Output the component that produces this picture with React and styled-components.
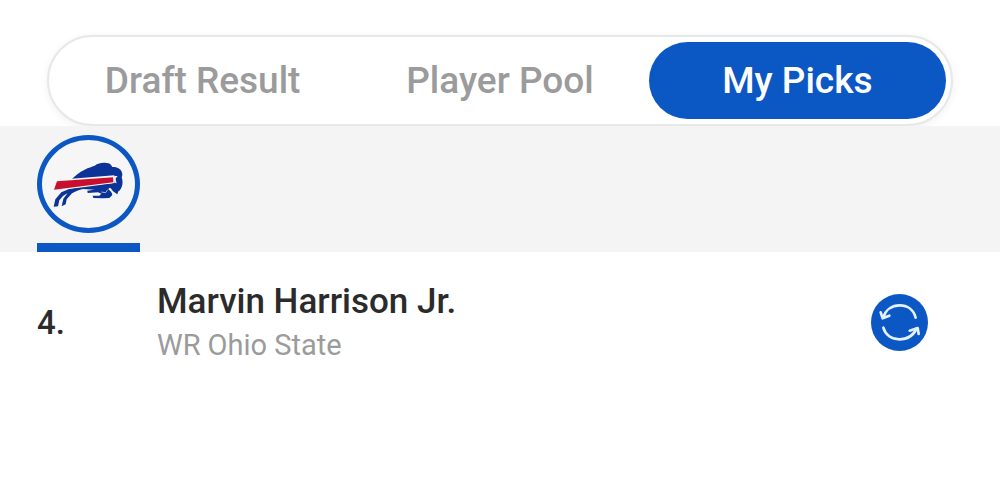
import React, { useState } from "react";
import styled, { createGlobalStyle } from "styled-components";

const tabs = ["Draft Result", "Player Pool", "My Picks"];

const picks = [
    { number: 4, name: "Marvin Harrison Jr.", position: "WR", school: "Ohio State" },
];

const App = () => {
    const [active, setActive] = useState("My Picks");
    return (
        <>
            <GlobalStyle />
            <Header>
                <Tabs role="tablist">
                    {tabs.map((tab) => (
                        <Tab
                            key={tab}
                            type="button"
                            role="tab"
                            aria-selected={tab === active}
                            $active={tab === active}
                            onClick={() => setActive(tab)}
                        >
                            {tab}
                        </Tab>
                    ))}
                </Tabs>
            </Header>
            <TeamBar>
                <Team type="button" aria-label="Buffalo Bills">
                    <TeamCircle>
                        <BillsLogo />
                    </TeamCircle>
                </Team>
            </TeamBar>
            <PickList>
                {picks.map((pick) => (
                    <Pick key={pick.number}>
                        <PickNumber>{pick.number}.</PickNumber>
                        <Player>
                            <PlayerName>{pick.name}</PlayerName>
                            <PlayerInfo>
                                <span>{pick.position}</span>
                                <span>{pick.school}</span>
                            </PlayerInfo>
                        </Player>
                        <SwapButton type="button" aria-label="Change pick">
                            <SwapIcon />
                        </SwapButton>
                    </Pick>
                ))}
            </PickList>
        </>
    );
};

const BillsLogo = () => (
    <svg width="80" height="56" viewBox="0 0 240 168" aria-hidden="true">
        {/* body */}
        <path
            fill="#0b3496"
            d="M66 72 C78 59 91 48 107 41 C119 34 128 33 137 29 C148 21 161 19 172 21 C181 21 187 26 190 33 C198 33 209 34 215 42 C221 50 221 58 218 64 C221 73 222 84 218 93 C215 101 211 105 208 106 L205 115 L192 106 C189 101 187 97 182 95 L178 99 C183 105 190 109 190 117 L181 126 L162 127 L133 126 L131 119 L151 119 L157 113 L147 109 L116 111 L115 104 L136 101 L102 99 C90 101 79 106 69 112 L53 130 L50 145 L38 151 L43 128 L56 111 L42 120 L31 133 L27 151 L14 152 L19 130 L37 109 L60 99 L102 90 L190 82 L190 64 Z"
        />
        {/* charging streak */}
        <path fill="#f5f5f5" d="M21 72 L196 58 L197 81 L102 94 L13 104 Z" />
        <path fill="#c8102e" d="M24 76 L193 64 L193 79 L15 101 Z" />
        {/* horn and eye */}
        <path fill="#f5f5f5" d="M192 63 C197 59 201 60 206 61 C202 64 200 67 200 70 C201 76 202 79 203 82 C199 81 196 78 195 74 Z" />
        <path stroke="#f5f5f5" strokeWidth="2" fill="none" d="M157 108 L170 110 L176 101" />
    </svg>
);

const SwapIcon = () => (
    <svg width="57" height="57" viewBox="33 41 171 171" aria-hidden="true">
        <circle cx="118.5" cy="126.5" r="85.5" fill="#0b57c4" />
        <g fill="none" stroke="#e4f1ff" strokeWidth="8" strokeLinecap="round" strokeLinejoin="round">
            <path d="M167 112 C161 88 142 75 119 75 C96 75 77 88 70 111" />
            <path d="M62 96 L68 114 L88 106" />
            <path d="M70 142 C76 164 95 177 118 177 C142 177 161 164 170 144" />
            <path d="M149 151 L173 143 L176 161" />
        </g>
    </svg>
);

const GlobalStyle = createGlobalStyle`
    * {
        box-sizing: border-box;
    }
    body {
        margin: 0;
        background: #fff;
        color: #2b2b2b;
        font-family: Roboto, "Liberation Sans", sans-serif;
    }
    button {
        padding: 0;
        border: none;
        background: none;
        font: inherit;
        cursor: pointer;
    }
`;

const Header = styled.header`
    padding: 35px 47px 0;
`;

const Tabs = styled.div`
    display: grid;
    grid-template-columns: repeat(3, 1fr);
    padding: 5px;
    border: 2px solid #e8e8e8;
    border-radius: 48px;
    background: #fff;
    box-shadow: 0 2px 8px rgba(0, 0, 0, 0.06);
`;

const Tab = styled.button`
    && {
        height: 77px;
        border-radius: 40px;
        background: ${({ $active }) => ($active ? "#0b57c4" : "transparent")};
        color: ${({ $active }) => ($active ? "#fff" : "#9b9b9b")};
        font-size: 37px;
        font-weight: 500;
    }
`;

/* sits over the lower edge of the tab shadow */
const TeamBar = styled.nav`
    position: relative;
    display: flex;
    padding: 9px 37px 0;
    background: #f4f4f4;
`;

const Team = styled.button`
    && {
        padding-bottom: 10px;
        border-bottom: 9px solid #0b57c4;
    }
`;

const TeamCircle = styled.span`
    display: flex;
    align-items: center;
    justify-content: center;
    width: 103px;
    height: 98px;
    border: 5px solid #0b57c4;
    border-radius: 50%;
    background: #f6f6f6;
`;

const PickList = styled.ul`
    margin: 0;
    padding: 0;
    list-style: none;
`;

const Pick = styled.li`
    display: grid;
    grid-template-columns: 120px 1fr auto;
    align-items: center;
    padding: 27px 72px 27px 37px;
`;

const PickNumber = styled.span`
    font-size: 33px;
    font-weight: 500;
`;

const Player = styled.div`
    display: flex;
    flex-direction: column;
`;

const PlayerName = styled.span`
    font-size: 35px;
    font-weight: 500;
    line-height: 46px;
`;

const PlayerInfo = styled.span`
    display: flex;
    gap: 7px;
    color: #9b9b9b;
    font-size: 29px;
    line-height: 40px;
`;

const SwapButton = styled.button`
    svg {
        display: block;
    }
`;

export default App;
